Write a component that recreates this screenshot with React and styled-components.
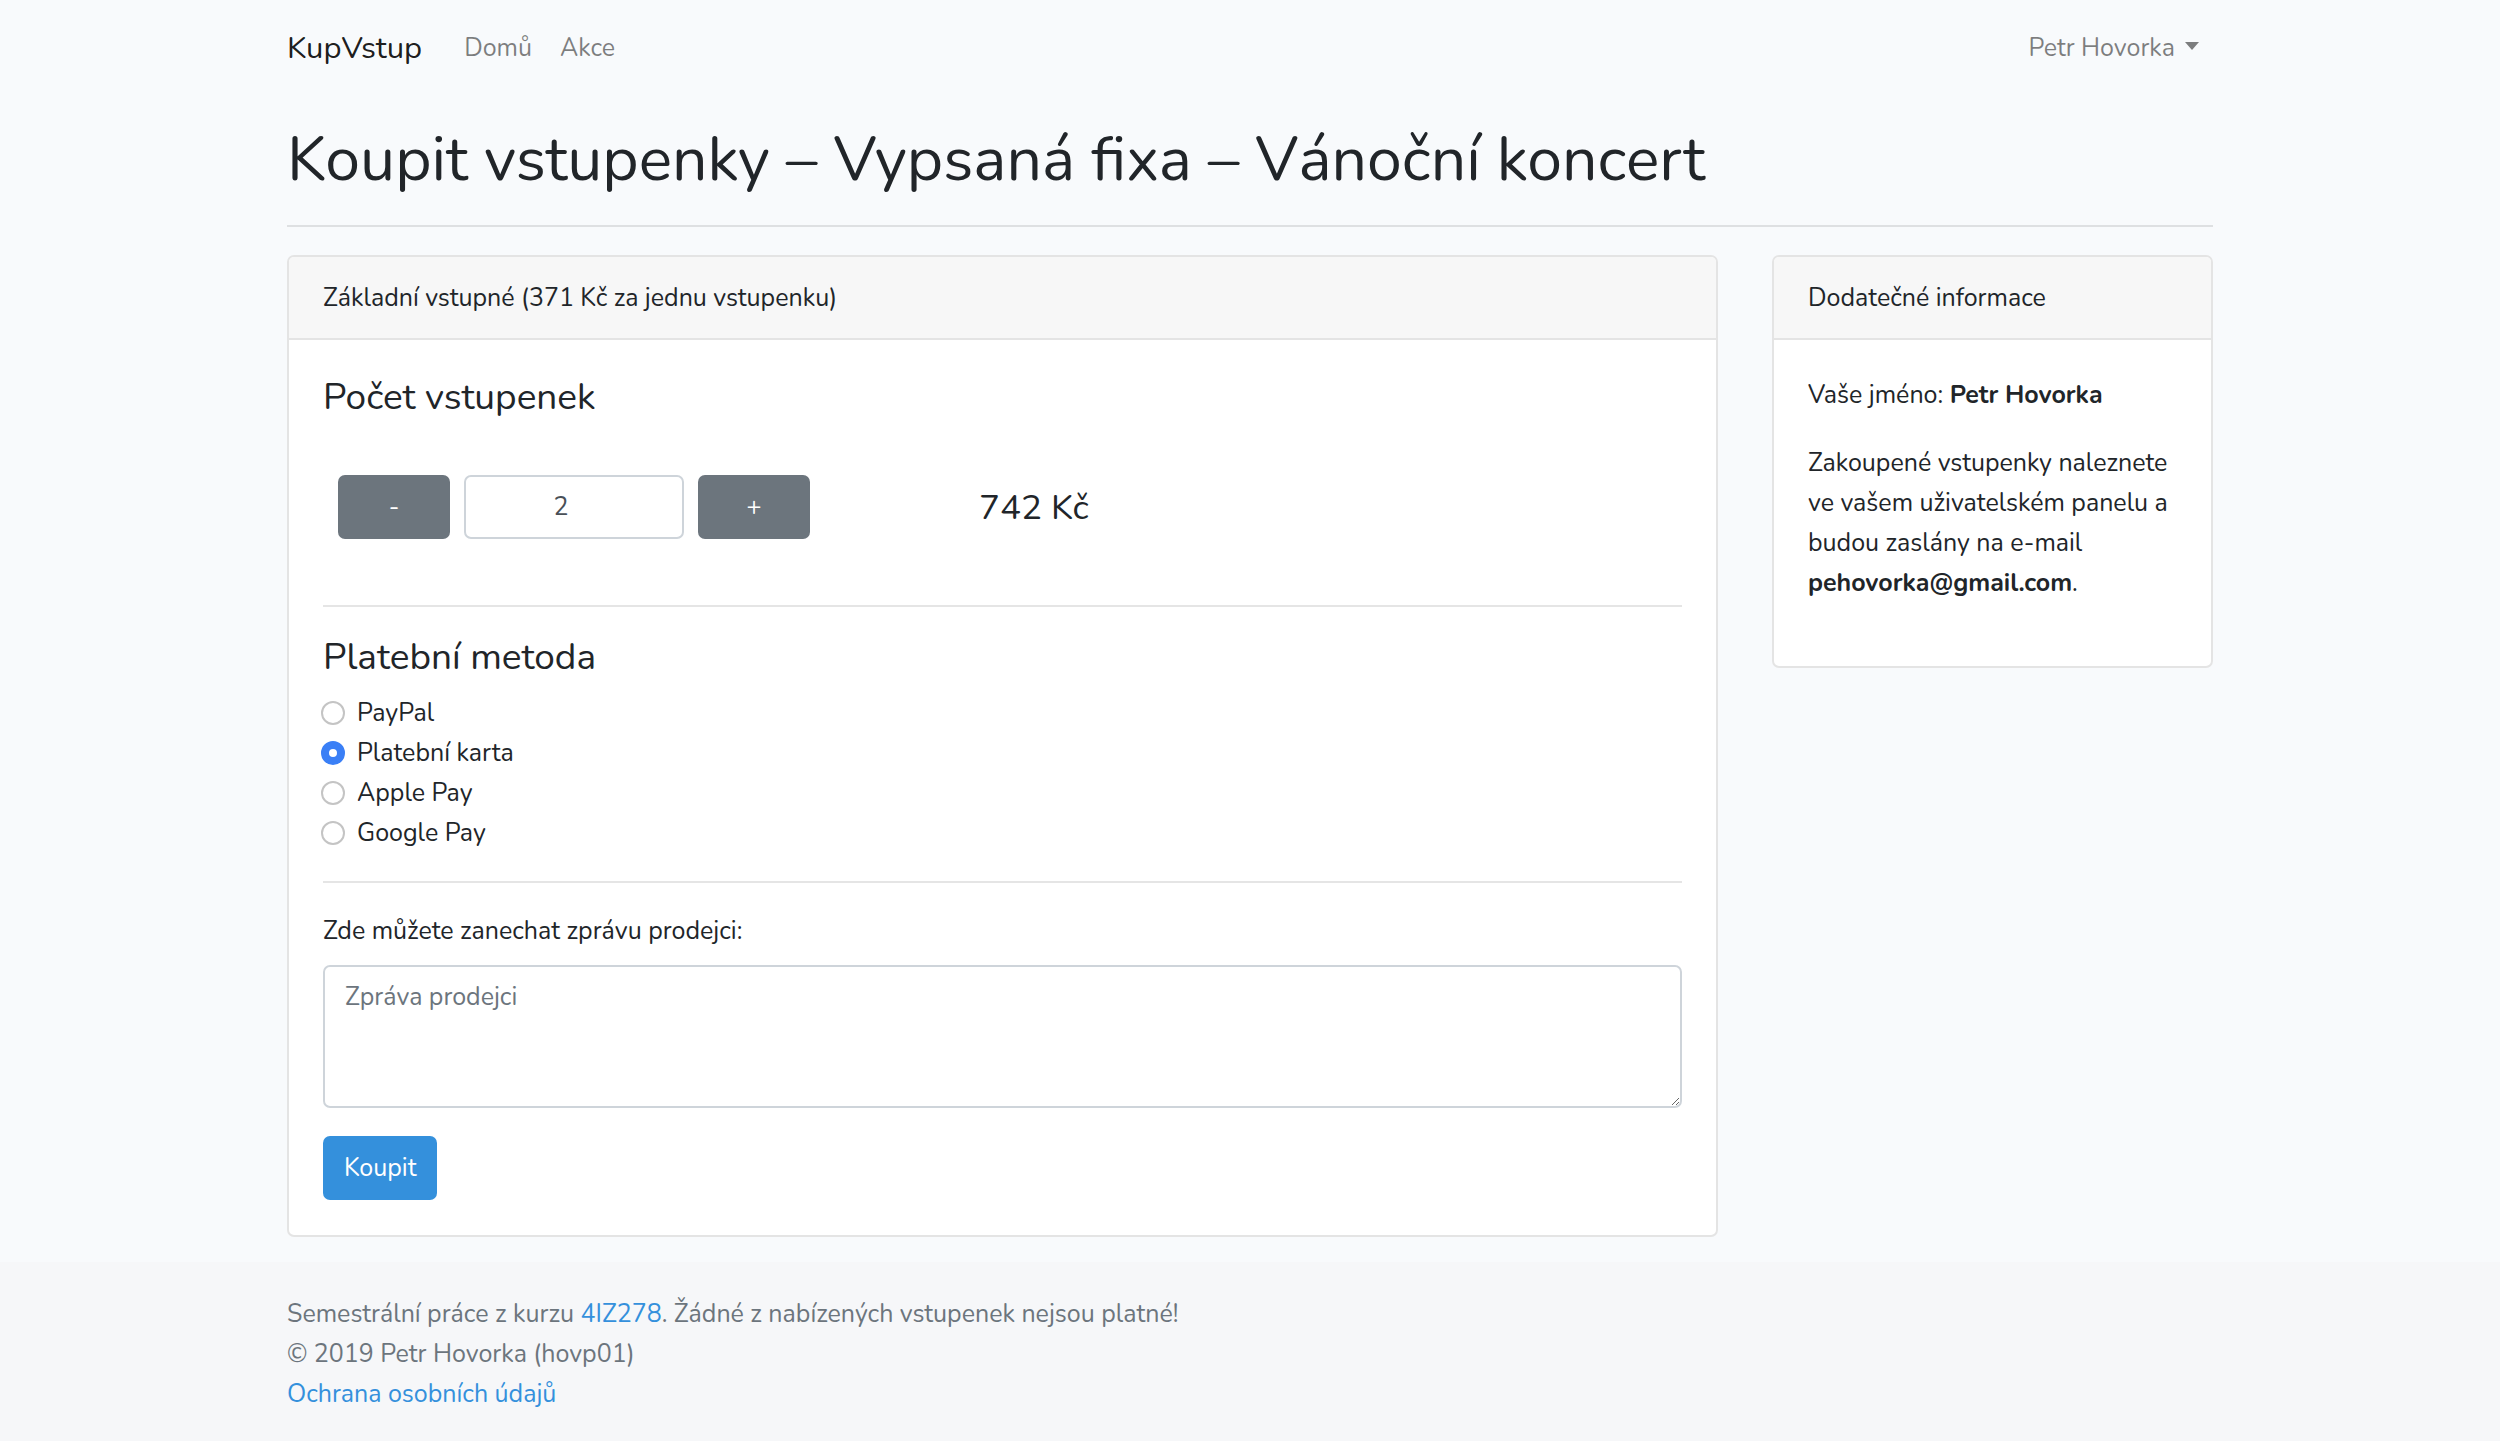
import React from "react";
import styled, { createGlobalStyle } from "styled-components";

const GlobalStyle = createGlobalStyle`
  * { box-sizing: border-box; }
  html, body { margin: 0; padding: 0; }
  body {
    background: #f8fafc;
    color: #212529;
    font-family: "Nunito", "Lato", "Open Sans", sans-serif;
    font-size: 25px;
    line-height: 40px;
  }
`;

const Page = styled.div`
  min-height: 100vh;
  display: flex;
  flex-direction: column;
`;

const Container = styled.div`
  width: 1926px;
  margin: 0 auto;
`;

const Navbar = styled.nav`
  padding: 14px 0;
`;

const NavInner = styled(Container)`
  display: flex;
  align-items: center;
`;

const Brand = styled.a`
  font-size: 31px;
  line-height: 50px;
  padding: 9px 0;
  margin-right: 28px;
  color: rgba(0, 0, 0, 0.9);
  text-decoration: none;
`;

const NavList = styled.div`
  display: flex;
  flex: 1;
`;

const NavLink = styled.a`
  display: flex;
  align-items: center;
  padding: 14px 14px;
  color: rgba(0, 0, 0, 0.5);
  text-decoration: none;
`;

const Caret = styled.span`
  display: inline-block;
  margin-left: 10px;
  border-top: 8px solid rgba(0, 0, 0, 0.5);
  border-left: 7.5px solid transparent;
  border-right: 7.5px solid transparent;
  transform: translateY(-2px);
`;

const Main = styled.main`
  padding-bottom: 25px;
`;

const Title = styled.h1`
  font-size: 62.5px;
  font-weight: 400;
  line-height: 75px;
  margin: 26px 0 0;
`;

const Divider = styled.hr`
  border: 0;
  border-top: 2px solid rgba(0, 0, 0, 0.1);
  margin: ${(p) => p.$my || "28px"} 0;
`;

const Grid = styled.div`
  display: grid;
  grid-template-columns: 1431px 441px;
  gap: 54px;
  align-items: start;
`;

const Card = styled.section`
  background: #fff;
  border: 2px solid #e4e4e4;
  border-radius: 7px;
  overflow: hidden;
`;

const CardHeader = styled.div`
  background: #f7f7f7;
  border-bottom: 2px solid #e4e4e4;
  padding: 21px 34px 20px;
`;

const CardBody = styled.div`
  padding: 35px 34px;
`;

const SectionTitle = styled.h4`
  font-size: 37px;
  font-weight: 400;
  line-height: 45px;
  margin: 0 0 ${(p) => p.$mb || "14px"};
`;

const CounterRow = styled.div`
  display: flex;
  align-items: center;
  gap: 14px;
  padding-left: 15px;
  margin: 55px 0 66px;
`;

const StepButton = styled.button`
  width: 112px;
  height: 64px;
  border: 0;
  border-radius: 7px;
  background: #6c757d;
  color: #fff;
  font-family: inherit;
  font-size: 25px;
  line-height: 40px;
  padding: 0;
`;

const CountInput = styled.input`
  width: 220px;
  height: 64px;
  border: 2px solid #ced4da;
  border-radius: 7px;
  background: #fff;
  color: #495057;
  font-family: inherit;
  font-size: 25px;
  text-align: center;
  padding: 0 26px 0 0;
`;

const Price = styled.div`
  margin-left: 155px;
  font-size: 35px;
  line-height: 45px;
`;

const RadioList = styled.div`
  display: flex;
  flex-direction: column;
`;

const RadioLabel = styled.label`
  display: flex;
  align-items: center;
  height: 40px;
  gap: 12px;
`;

const Radio = styled.input`
  appearance: none;
  margin: 0 0 0 -2px;
  width: 24px;
  height: 24px;
  border-radius: 50%;
  border: 2px solid #c4c4c4;
  background: #fff;
  &:checked {
    border: 8px solid #3a7ff6;
    background: #fff;
  }
`;

const FieldLabel = styled.label`
  display: block;
  margin-bottom: 14px;
`;

const MessageArea = styled.textarea`
  display: block;
  width: 100%;
  height: 143px;
  border: 2px solid #ced4da;
  border-radius: 7px;
  padding: 10px 20px;
  font-family: inherit;
  font-size: 25px;
  line-height: 40px;
  color: #495057;
  margin-bottom: 28px;
  &::placeholder { color: #6c757d; }
`;

const PrimaryButton = styled.button`
  height: 64px;
  padding: 0 21px;
  border: 0;
  border-radius: 7px;
  background: #3490dc;
  color: #fff;
  font-family: inherit;
  font-size: 25px;
  line-height: 40px;
`;

const Paragraph = styled.p`
  margin: 0 0 28px;
`;

const Footer = styled.footer`
  flex: 1;
  background: #f6f7f9;
  padding: 32px 0 29px;
  color: #6c757d;
`;

const FooterLine = styled.div`
  line-height: 40px;
`;

const Link = styled.a`
  color: #3490dc;
  text-decoration: none;
`;

const methods = ["PayPal", "Platební karta", "Apple Pay", "Google Pay"];

export default function App() {
  return (
    <>
      <GlobalStyle />
      <Page>
        <Navbar>
          <NavInner>
            <Brand href="#">KupVstup</Brand>
            <NavList>
              <NavLink href="#">Domů</NavLink>
              <NavLink href="#">Akce</NavLink>
            </NavList>
            <NavLink href="#">
              Petr Hovorka
              <Caret />
            </NavLink>
          </NavInner>
        </Navbar>
        <Main>
          <Container>
            <Title>Koupit vstupenky – Vypsaná fixa – Vánoční koncert</Title>
            <Divider $my="28px" />
            <Grid>
              <Card>
                <CardHeader>Základní vstupné (371 Kč za jednu vstupenku)</CardHeader>
                <CardBody>
                  <SectionTitle>Počet vstupenek</SectionTitle>
                  <CounterRow>
                    <StepButton>-</StepButton>
                    <CountInput defaultValue="2" />
                    <StepButton>+</StepButton>
                    <Price>742 Kč</Price>
                  </CounterRow>
                  <Divider />
                  <SectionTitle $mb="13px">Platební metoda</SectionTitle>
                  <RadioList>
                    {methods.map((m, i) => (
                      <RadioLabel key={m}>
                        <Radio type="radio" name="method" defaultChecked={i === 1} />
                        {m}
                      </RadioLabel>
                    ))}
                  </RadioList>
                  <Divider />
                  <FieldLabel>Zde můžete zanechat zprávu prodejci:</FieldLabel>
                  <MessageArea placeholder="Zpráva prodejci" />
                  <PrimaryButton>Koupit</PrimaryButton>
                </CardBody>
              </Card>
              <Card>
                <CardHeader>Dodatečné informace</CardHeader>
                <CardBody>
                  <Paragraph>
                    Vaše jméno: <strong>Petr Hovorka</strong>
                  </Paragraph>
                  <Paragraph>
                    Zakoupené vstupenky naleznete
                    <br />
                    ve vašem uživatelském panelu a
                    <br />
                    budou zaslány na e-mail
                    <br />
                    <strong>pehovorka@gmail.com</strong>.
                  </Paragraph>
                </CardBody>
              </Card>
            </Grid>
          </Container>
        </Main>
        <Footer>
          <Container>
            <FooterLine>
              Semestrální práce z kurzu <Link href="#">4IZ278</Link>. Žádné z nabízených vstupenek nejsou platné!
            </FooterLine>
            <FooterLine>© 2019 Petr Hovorka (hovp01)</FooterLine>
            <FooterLine>
              <Link href="#">Ochrana osobních údajů</Link>
            </FooterLine>
          </Container>
        </Footer>
      </Page>
    </>
  );
}
